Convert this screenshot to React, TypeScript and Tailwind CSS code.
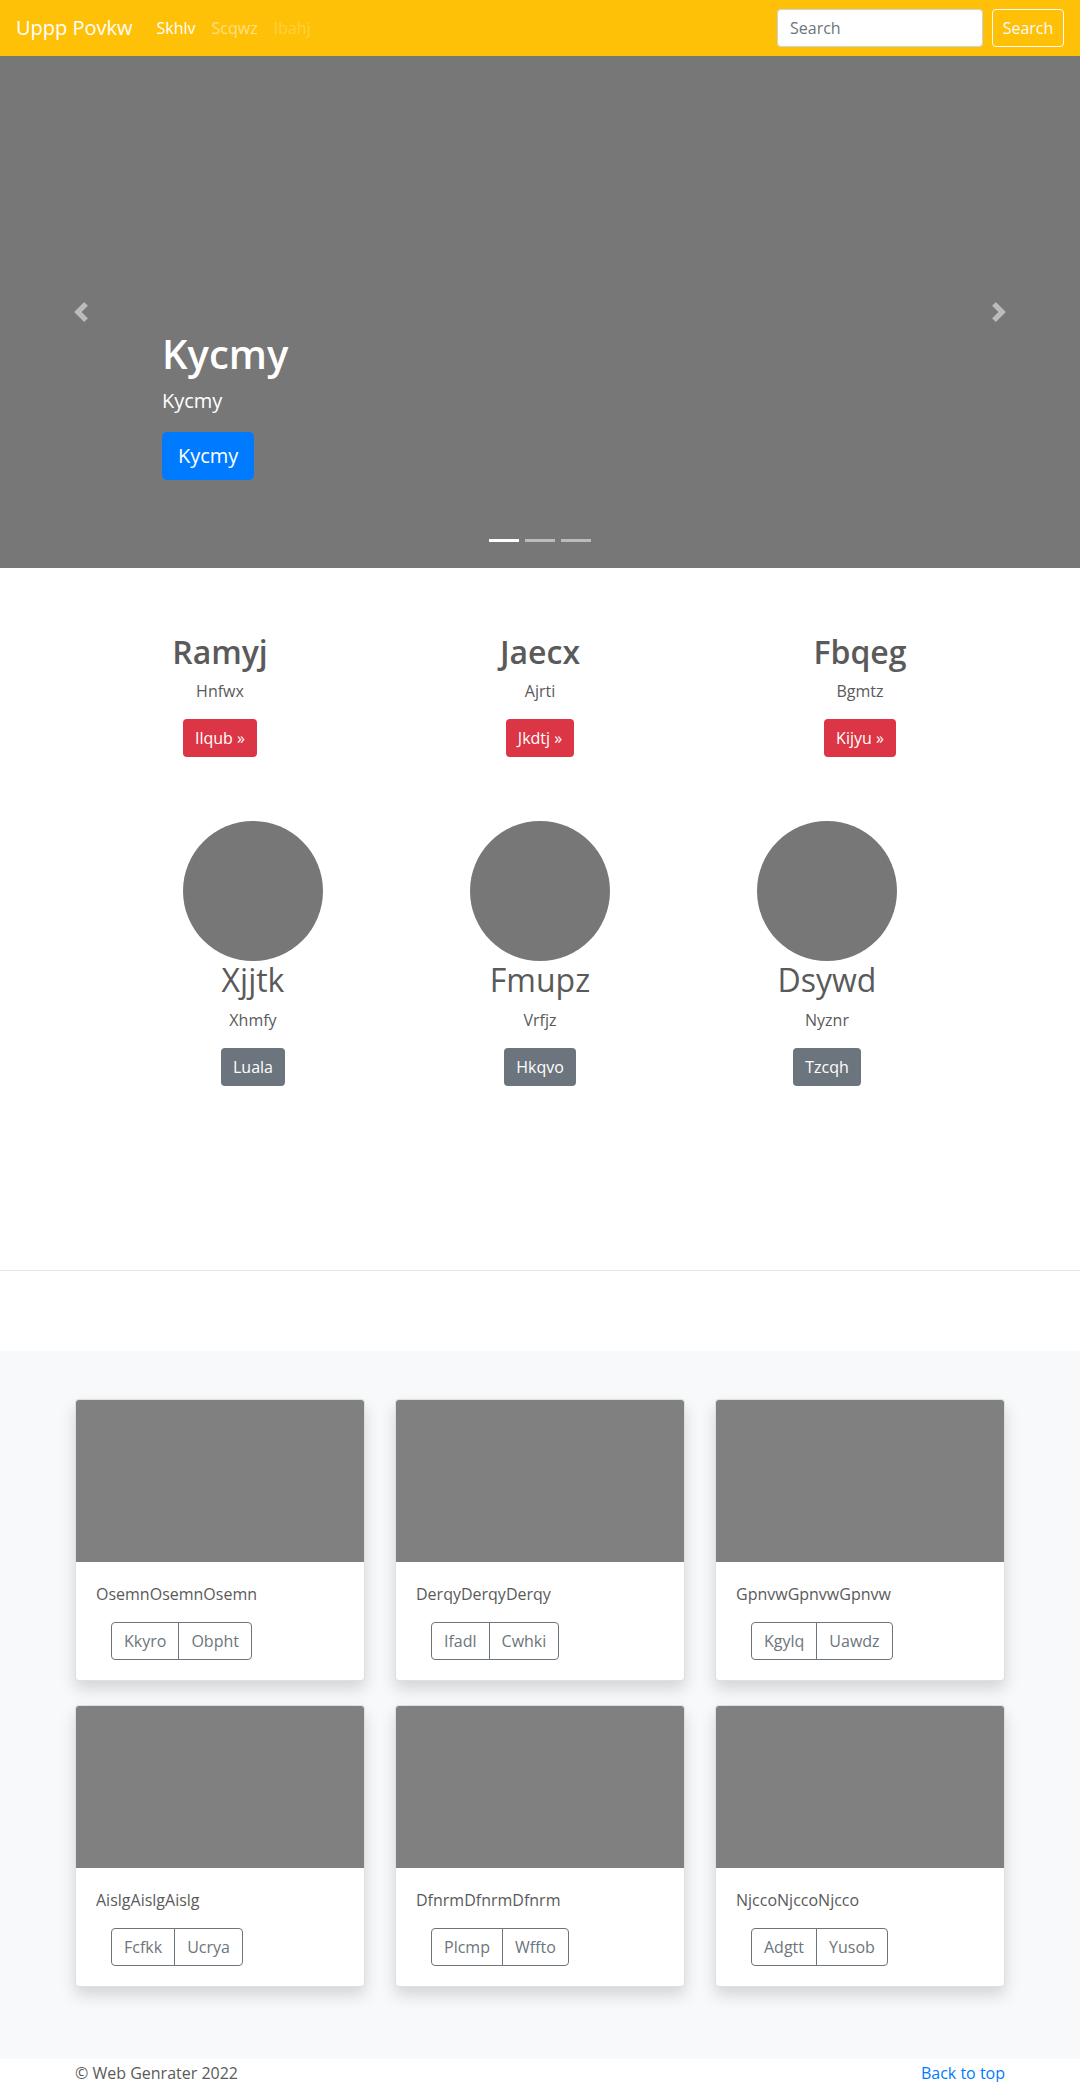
import React from "react";

const features = [
  { title: "Ramyj", text: "Hnfwx", btn: "Ilqub »" },
  { title: "Jaecx", text: "Ajrti", btn: "Jkdtj »" },
  { title: "Fbqeg", text: "Bgmtz", btn: "Kijyu »" },
];

const people = [
  { title: "Xjjtk", text: "Xhmfy", btn: "Luala" },
  { title: "Fmupz", text: "Vrfjz", btn: "Hkqvo" },
  { title: "Dsywd", text: "Nyznr", btn: "Tzcqh" },
];

const cards = [
  { text: "OsemnOsemnOsemn", a: "Kkyro", b: "Obpht" },
  { text: "DerqyDerqyDerqy", a: "Ifadl", b: "Cwhki" },
  { text: "GpnvwGpnvwGpnvw", a: "Kgylq", b: "Uawdz" },
  { text: "AislgAislgAislg", a: "Fcfkk", b: "Ucrya" },
  { text: "DfnrmDfnrmDfnrm", a: "Plcmp", b: "Wffto" },
  { text: "NjccoNjccoNjcco", a: "Adgtt", b: "Yusob" },
];

function Chevron({ dir }: { dir: "prev" | "next" }) {
  const d =
    dir === "prev"
      ? "M5.25 0l-4 4 4 4 1.5-1.5L4.25 4l2.5-2.5L5.25 0z"
      : "M2.75 0l-1.5 1.5L3.75 4l-2.5 2.5L2.75 8l4-4-4-4z";
  return (
    <svg width="20" height="20" viewBox="0 0 8 8" fill="#fff">
      <path d={d} />
    </svg>
  );
}

export default function App() {
  return (
    <div className="min-h-screen bg-white text-[#5a5a5a] font-['Open_Sans','Noto_Sans',sans-serif] text-base leading-6">
      {/* Navbar */}
      <nav className="h-14 bg-[#ffc107] flex items-center px-4">
        <span className="text-white text-xl leading-[30px] mr-4">Uppp Povkw</span>
        <div className="flex items-center">
          <span className="px-2 text-white">Skhlv</span>
          <span className="px-2 text-white/50">Scqwz</span>
          <span className="px-2 text-white/25">Ibahj</span>
        </div>
        <div className="ml-auto flex items-center">
          <input
            placeholder="Search"
            className="w-[206px] h-[38px] bg-white border border-[#ced4da] rounded px-3 text-base text-[#495057] placeholder-[#6c757d] mr-[9px] outline-none"
          />
          <button className="h-[38px] w-[72px] border border-[#f8f9fa] rounded text-[#f8f9fa] text-base">
            Search
          </button>
        </div>
      </nav>

      {/* Carousel */}
      <div className="relative h-[512px] bg-[#777777]">
        <div className="absolute left-0 top-0 bottom-0 w-[15%] flex items-center justify-center opacity-50">
          <Chevron dir="prev" />
        </div>
        <div className="absolute right-0 top-0 bottom-0 w-[15%] flex items-center justify-center opacity-50">
          <Chevron dir="next" />
        </div>
        <div className="absolute left-[15%] right-[15%] bottom-[88px] text-white">
          <h1 className="text-[40px] leading-[48px] font-semibold mb-2">Kycmy</h1>
          <p className="text-xl leading-[30px] font-normal mb-4">Kycmy</p>
          <button className="h-12 px-4 bg-[#007bff] rounded-[5px] text-xl text-white">Kycmy</button>
        </div>
        <div className="absolute left-0 right-0 bottom-[26px] flex justify-center gap-[6px]">
          <span className="w-[30px] h-[3px] bg-white" />
          <span className="w-[30px] h-[3px] bg-white/50" />
          <span className="w-[30px] h-[3px] bg-white/50" />
        </div>
      </div>

      {/* Features */}
      <div className="w-[960px] mx-auto grid grid-cols-3 pt-[65px]">
        {features.map((f) => (
          <div key={f.title} className="flex flex-col items-center text-center">
            <h2 className="text-[32px] leading-[38.4px] font-semibold mb-2">{f.title}</h2>
            <p className="mb-4">{f.text}</p>
            <button className="h-[38px] px-3 bg-[#dc3545] text-white rounded text-base">{f.btn}</button>
          </div>
        ))}
      </div>

      {/* People */}
      <div className="w-[861px] mx-auto grid grid-cols-3 mt-16">
        {people.map((p) => (
          <div key={p.title} className="flex flex-col items-center text-center">
            <div className="w-[140px] h-[140px] rounded-full bg-[#777777]" />
            <h2 className="text-[32px] leading-[38.4px] font-normal mb-2">{p.title}</h2>
            <p className="mb-4">{p.text}</p>
            <button className="h-[38px] px-3 bg-[#6c757d] text-white rounded text-base">{p.btn}</button>
          </div>
        ))}
      </div>

      <hr className="mt-[184px] mb-20 border-0 border-t border-black/10" />

      {/* Album */}
      <div className="bg-[#f8f9fa] pt-12 pb-[72px]">
        <div className="w-[960px] mx-auto px-[15px] grid grid-cols-3 gap-x-[30px] gap-y-6">
          {cards.map((c) => (
            <div
              key={c.text}
              className="bg-white border border-black/[0.125] rounded overflow-hidden shadow-[0_0.5rem_1rem_rgba(0,0,0,0.15)]"
            >
              <div className="h-[162px] bg-[#808080]" />
              <div className="p-5">
                <p className="mb-4">{c.text}</p>
                <div className="flex ml-[15px]">
                  <button className="h-[38px] px-3 border border-[#6c757d] text-[#6c757d] rounded-l text-base">
                    {c.a}
                  </button>
                  <button className="h-[38px] px-3 border border-[#6c757d] -ml-px text-[#6c757d] rounded-r text-base">
                    {c.b}
                  </button>
                </div>
              </div>
            </div>
          ))}
        </div>
      </div>

      {/* Footer */}
      <footer className="w-[960px] mx-auto px-[15px] pt-[2px] pb-12 flex justify-between">
        <p>© Web Genrater 2022</p>
        <a href="#" className="text-[#007bff]">Back to top</a>
      </footer>
    </div>
  );
}
